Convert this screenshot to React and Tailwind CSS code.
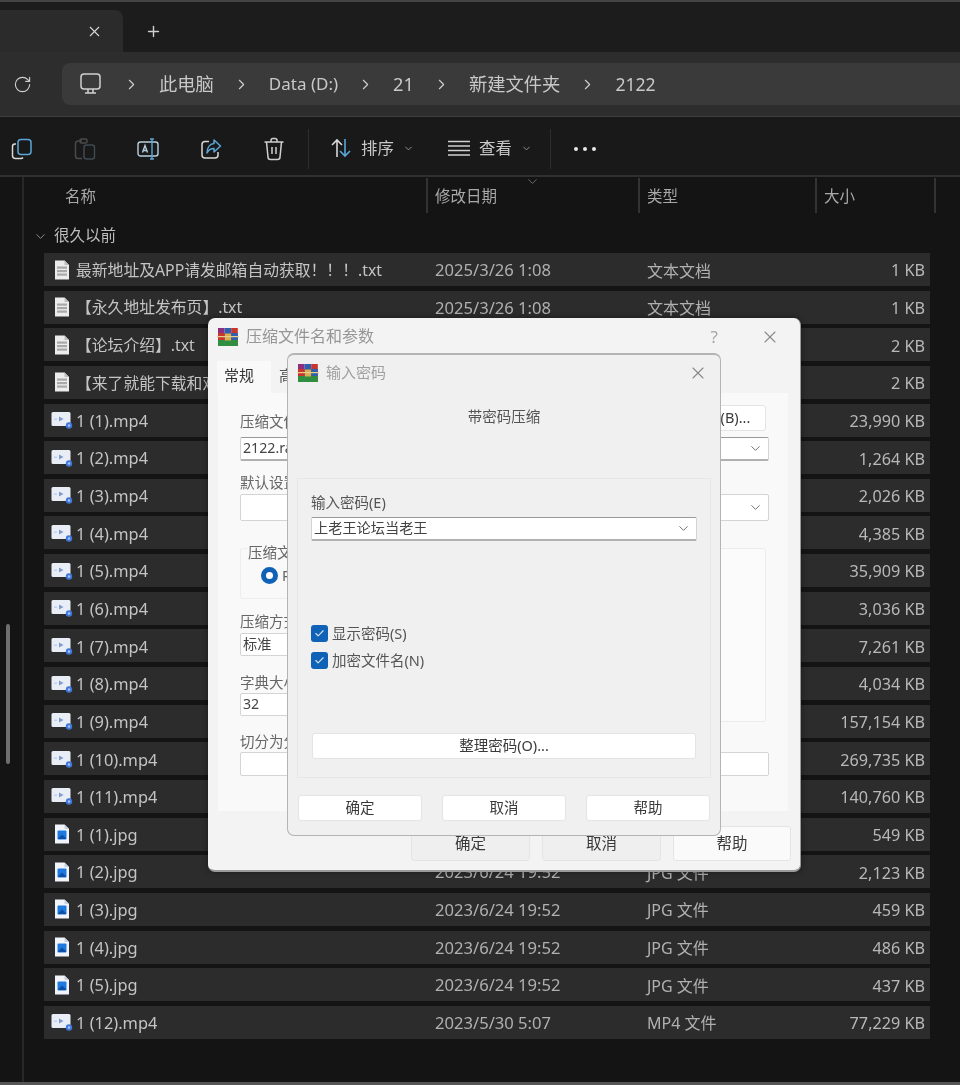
import React from "react";
import { X, Plus, RotateCw, ChevronRight, ChevronDown, Check } from "lucide-react";

const FONT = "font-['Noto_Sans','Noto_Sans_CJK_SC',sans-serif]";

const rows = [
  ["txt", "最新地址及APP请发邮箱自动获取！！！.txt", "2025/3/26 1:08", "文本文档", "1 KB"],
  ["txt", "【永久地址发布页】.txt", "2025/3/26 1:08", "文本文档", "1 KB"],
  ["txt", "【论坛介绍】.txt", "2025/3/26 1:08", "文本文档", "2 KB"],
  ["txt", "【来了就能下载和观看】.txt", "2025/3/26 1:08", "文本文档", "2 KB"],
  ["mp4", "1 (1).mp4", "2023/6/24 19:52", "MP4 文件", "23,990 KB"],
  ["mp4", "1 (2).mp4", "2023/6/24 19:52", "MP4 文件", "1,264 KB"],
  ["mp4", "1 (3).mp4", "2023/6/24 19:52", "MP4 文件", "2,026 KB"],
  ["mp4", "1 (4).mp4", "2023/6/24 19:52", "MP4 文件", "4,385 KB"],
  ["mp4", "1 (5).mp4", "2023/6/24 19:52", "MP4 文件", "35,909 KB"],
  ["mp4", "1 (6).mp4", "2023/6/24 19:52", "MP4 文件", "3,036 KB"],
  ["mp4", "1 (7).mp4", "2023/6/24 19:52", "MP4 文件", "7,261 KB"],
  ["mp4", "1 (8).mp4", "2023/6/24 19:52", "MP4 文件", "4,034 KB"],
  ["mp4", "1 (9).mp4", "2023/6/24 19:52", "MP4 文件", "157,154 KB"],
  ["mp4", "1 (10).mp4", "2023/6/24 19:52", "MP4 文件", "269,735 KB"],
  ["mp4", "1 (11).mp4", "2023/6/24 19:52", "MP4 文件", "140,760 KB"],
  ["jpg", "1 (1).jpg", "2023/6/24 19:52", "JPG 文件", "549 KB"],
  ["jpg", "1 (2).jpg", "2023/6/24 19:52", "JPG 文件", "2,123 KB"],
  ["jpg", "1 (3).jpg", "2023/6/24 19:52", "JPG 文件", "459 KB"],
  ["jpg", "1 (4).jpg", "2023/6/24 19:52", "JPG 文件", "486 KB"],
  ["jpg", "1 (5).jpg", "2023/6/24 19:52", "JPG 文件", "437 KB"],
  ["mp4", "1 (12).mp4", "2023/5/30 5:07", "MP4 文件", "77,229 KB"],
];

function FileIcon({ type }) {
  if (type === "mp4") {
    return (
      <svg width="22" height="18" viewBox="0 0 22 18" className="shrink-0">
        <rect x="0.5" y="1" width="19" height="14" rx="1.5" fill="#e9edf5" />
        <path d="M8 5.5 L12.5 8 L8 10.5 Z" fill="#7d9bd0" />
        <rect x="3" y="7.5" width="3" height="1.5" fill="#c3cfe6" />
        <circle cx="18" cy="14.5" r="3.2" fill="#3f78d8" />
        <circle cx="18" cy="14.5" r="1.2" fill="#a9c6f4" />
      </svg>
    );
  }
  if (type === "jpg") {
    return (
      <svg width="16" height="20" viewBox="0 0 16 20" className="shrink-0">
        <path d="M1 0.5 H10.5 L15 5 V19.5 H1 Z" fill="#f1f4fa" />
        <path d="M10.5 0.5 V5 H15 Z" fill="#c9d2e2" />
        <rect x="3.5" y="6.5" width="9" height="9" rx="1" fill="#1f7ae0" />
        <path d="M4 14.5 L8 10.5 L12 14 V15 H4 Z" fill="#0f4fa8" />
      </svg>
    );
  }
  return (
    <svg width="16" height="20" viewBox="0 0 16 20" className="shrink-0">
      <path d="M1 0.5 H10.5 L15 5 V19.5 H1 Z" fill="#ececec" />
      <path d="M10.5 0.5 V5 H15 Z" fill="#bdbdbd" />
      <g fill="#a8a8a8">
        <rect x="3" y="6.5" width="10" height="2.2" />
        <rect x="3" y="10" width="10" height="2.2" />
        <rect x="3" y="13.5" width="10" height="2.2" />
      </g>
    </svg>
  );
}

function RarIcon() {
  return (
    <svg width="22" height="20" viewBox="0 0 22 20" className="shrink-0">
      <rect x="1" y="1" width="6.6" height="18" fill="#8c2f7f" />
      <rect x="7.6" y="1" width="6.6" height="18" fill="#2f5fb0" />
      <rect x="14.2" y="1" width="6.6" height="18" fill="#c8352f" />
      <rect x="1" y="6" width="6.6" height="7" fill="#c8352f" />
      <rect x="14.2" y="6" width="6.6" height="7" fill="#2f5fb0" />
      <rect x="1" y="13" width="6.6" height="6" fill="#2e8f3e" />
      <rect x="7.6" y="13" width="6.6" height="6" fill="#2e8f3e" />
      <rect x="14.2" y="13" width="6.6" height="6" fill="#2e8f3e" />
      <rect x="8" y="6.5" width="6" height="7" fill="#d8b04a" />
      <rect x="0" y="9" width="22" height="1.2" fill="#e8d08a" />
    </svg>
  );
}

function Row({ r }) {
  return (
    <div className="flex items-center h-[33px] bg-[#2c2c2c] text-[#c4c4c4]">
      <div className="w-[32px] flex justify-center pl-[3px] shrink-0">
        <FileIcon type={r[0]} />
      </div>
      <div className={`w-[359px] pt-[2px] whitespace-nowrap overflow-hidden ${r[0] === "txt" ? "text-[15.8px]" : "text-[16.4px]"}`}>{r[1]}</div>
      <div className="w-[212px] pt-[2px] text-[#b0b0b0] text-[16.6px]">{r[2]}</div>
      <div className="w-[170px] pt-[2px] text-[#b0b0b0] text-[16px]">{r[3]}</div>
      <div className="flex-1 pt-[2px] text-right pr-[5px] text-[#b8b8b8] text-[16.2px]">{r[4]}</div>
    </div>
  );
}

function Crumb({ children, cls = "text-[18.3px]" }) {
  return <span className={`whitespace-nowrap ${cls}`}>{children}</span>;
}
function Sep() {
  return <ChevronRight size={17} strokeWidth={1.6} className="text-[#cfcfcf] mx-[19px] shrink-0" />;
}
function HCol({ w, children }) {
  return (
    <div className={`${w} h-[35px] border-r-2 border-[#333] flex items-center`}>
      {children}
    </div>
  );
}

function Combo({ w, text, arrow, h = "h-[24px]", strong }) {
  return (
    <div className={`${w} ${h} bg-white rounded-[2px] border border-[#d4d4d4] ${strong ? "border-[#bcbcbc] border-t-[#999] border-b-2 border-b-[#b0b0b0]" : ""} flex items-center justify-between pl-[2px] pr-[5px] pb-[2px] text-[14.2px] text-[#444]`}>
      <span className="whitespace-nowrap">{text}</span>
      {arrow && <ChevronDown size={15} strokeWidth={1.5} className="text-[#666] shrink-0 mt-[2px]" />}
    </div>
  );
}

function DlgButton({ w, h, children, cls = "" }) {
  return (
    <div className={`${w} ${h} rounded-[3px] border border-[#e4e4e4] flex items-center justify-center text-[#3a3a3a] ${cls}`}>
      {children}
    </div>
  );
}

function Checkbox({ label }) {
  return (
    <div className="flex items-center gap-[4px] h-[17px]">
      <div className="w-[17px] h-[17px] rounded-[3px] bg-[#0f62b5] flex items-center justify-center">
        <Check size={11} strokeWidth={2.5} className="text-[#cfe3f7]" />
      </div>
      <span className="text-[14.5px] text-[#555]">{label}</span>
    </div>
  );
}

function OuterDialog() {
  return (
    <div className="absolute left-[208px] top-[318px] w-[593px] h-[554px] bg-[#f3f3f3] rounded-[7px] border-b-2 border-r border-[#9a9a9a] flex flex-col shadow-[0_0_6px_rgba(0,0,0,0.4)]">
      <div className="h-[37px] flex items-center pl-[9px] pr-[20px] shrink-0">
        <RarIcon />
        <span className="ml-[7px] text-[16px] text-[#969696] -mt-[2px]">压缩文件名和参数</span>
        <span className="ml-auto text-[#a8a8a8] text-[17px] mr-[42px]">?</span>
        <X size={20} strokeWidth={1.3} className="text-[#8a8a8a]" />
      </div>
      <div className="flex pl-[9px] h-[38px] shrink-0 items-end">
        <div className="h-[32px] w-[54px] bg-[#f9f9f9] flex items-center pl-[7px] pb-[4px] text-[15px] text-[#333]">常规</div>
        <div className="h-[32px] w-[54px] flex items-center pl-[8px] pb-[4px] text-[15px] text-[#555]">高级</div>
      </div>
      <div className="mx-[10px] w-[570px] h-[418px] bg-[#f9f9f9] px-[22px] text-[14.5px] text-[#666] flex flex-col">
        <div className="flex justify-end h-[12px]">
          <DlgButton w="w-[120px]" h="h-[26px]" cls="mt-[12px] pl-[30px] text-[14.5px] bg-white shrink-0">浏览(B)...</DlgButton>
        </div>
        <div className="mt-[6px] h-[20px] leading-[20px]">压缩文件名(A)</div>
        <div className="mt-[6px]"><Combo w="w-[529px]" text="2122.rar" arrow strong /></div>
        <div className="mt-[11px] h-[20px] leading-[20px]">默认设置</div>
        <div className="mt-[2px]"><Combo w="w-[529px]" text="" arrow h="h-[27px]" /></div>
        <div className="mt-[27px] flex">
          <div className="w-[200px] h-[51px] border border-[#eeeeee] rounded-[2px] px-[20px] relative">
            <div className="absolute left-[7px] top-[-7px] bg-[#f9f9f9] h-[20px] leading-[20px] w-[70px] whitespace-nowrap">压缩文件格式</div>
            <div className="flex items-center gap-[4px] mt-[16px]">
              <div className="w-[17px] h-[17px] rounded-full border-[5px] border-[#0f62b5] bg-white" />
              <span>RAR</span>
            </div>
          </div>
          <div className="ml-auto w-[50px] h-[174px] bg-[#fbfbfb] border border-[#ececec] rounded-[2px]" />
        </div>
        <div className="-mt-[111px] h-[20px] leading-[20px]">压缩方式(M)</div>
        <div className="mt-[2px]"><Combo w="w-[100px]" text="标准" h="h-[23px]" /></div>
        <div className="mt-[16px] h-[20px] leading-[20px]">字典大小(I)</div>
        <div className="mt-[1px]"><Combo w="w-[100px]" text="32" h="h-[23px]" /></div>
        <div className="mt-[15px] h-[20px] leading-[20px]">切分为分卷(V)</div>
        <div className="mt-[1px]"><Combo w="w-[529px]" text="" h="h-[24px]" /></div>
      </div>
      <div className="flex justify-end gap-[12px] pr-[9px] mt-[15px]">
        <DlgButton w="w-[119px]" h="h-[35px]" cls="text-[15.5px] bg-[#efefef]">确定</DlgButton>
        <DlgButton w="w-[119px]" h="h-[35px]" cls="text-[15.5px] bg-[#efefef]">取消</DlgButton>
        <DlgButton w="w-[118px]" h="h-[35px]" cls="text-[15.5px] bg-[#fafafa]">帮助</DlgButton>
      </div>
    </div>
  );
}

function InnerDialog() {
  return (
    <div className="absolute left-[287px] top-[353px] w-[434px] h-[483px] bg-[#f0f0f0] rounded-[7px] border border-[#b4b4b4] border-t-2 flex flex-col">
      <div className="h-[36px] flex items-center pl-[9px] pr-[12px] shrink-0">
        <RarIcon />
        <span className="ml-[7px] text-[15px] text-[#a0a0a0] -mt-[2px]">输入密码</span>
        <X size={20} strokeWidth={1.3} className="text-[#888] ml-auto" />
      </div>
      <div className="text-center text-[14.5px] text-[#555] mt-[15px] h-[20px] leading-[20px]">带密码压缩</div>
      <div className="mx-[9px] mt-[52px] w-[414px] h-[300px] border border-[#e6e6e6] px-[13px] flex flex-col shrink-0">
        <div className="mt-[13px] h-[20px] leading-[20px] text-[14.5px] text-[#555]">输入密码(E)</div>
        <div className="mt-[5px]"><Combo w="w-[386px]" text="上老王论坛当老王" arrow strong /></div>
        <div className="mt-[84px] flex flex-col gap-[10px]">
          <Checkbox label="显示密码(S)" />
          <Checkbox label="加密文件名(N)" />
        </div>
        <DlgButton w="w-[384px]" h="h-[26px]" cls="mt-[64px] ml-[1px] text-[14.5px] bg-white">整理密码(O)...</DlgButton>
      </div>
      <div className="flex justify-between px-[10px] mt-[17px]">
        <DlgButton w="w-[124px]" h="h-[26px]" cls="text-[14.5px] bg-white">确定</DlgButton>
        <DlgButton w="w-[124px]" h="h-[26px]" cls="text-[14.5px] bg-white">取消</DlgButton>
        <DlgButton w="w-[124px]" h="h-[26px]" cls="text-[14.5px] bg-white">帮助</DlgButton>
      </div>
    </div>
  );
}

export default function App() {
  return (
    <div className={`${FONT} relative w-[960px] h-[1085px] overflow-hidden bg-[#141414] flex flex-col blur-[0.4px]`}>
      {/* tab strip */}
      <div className="h-[52px] bg-[#1c1c1c] border-t-2 border-[#444] flex shrink-0 items-end">
        <div className="w-[123px] h-[42px] bg-[#2b2b2b] rounded-tr-[8px] flex items-center justify-end pr-[20px]">
          <X size={17} strokeWidth={1.5} className="text-[#d8d8d8]" />
        </div>
        <div className="ml-[22px] h-[42px] flex items-center">
          <Plus size={17} strokeWidth={2} className="text-[#d0d0d0]" />
        </div>
      </div>
      {/* address row */}
      <div className="h-[65px] bg-[#2d2d2d] border-b border-[#3f3f3f] flex items-center shrink-0">
        <div className="w-[62px] pl-[13px] shrink-0">
          <RotateCw size={19} strokeWidth={1.4} className="text-[#d0d0d0]" />
        </div>
        <div className="flex-1 h-[42px] bg-[#3a3a3a] rounded-l-[8px] flex items-center pl-[18px] text-[#c8c8c8]">
          <svg width="21" height="24" viewBox="0 0 21 24" fill="none" stroke="#d0d0d0" strokeWidth="1.5" className="shrink-0">
            <rect x="1" y="2" width="19" height="15" rx="3" />
            <path d="M5 21 H16 M8 17 V21 M13 17 V21" />
          </svg>
          <div className="ml-[3px] flex items-center">
            <Sep /><Crumb>此电脑</Crumb><Sep /><Crumb cls="text-[17px]">Data (D:)</Crumb><Sep /><Crumb>21</Crumb><Sep /><Crumb>新建文件夹</Crumb><Sep /><Crumb cls="text-[17.6px]">2122</Crumb>
          </div>
        </div>
      </div>
      {/* toolbar */}
      <div className="h-[60px] bg-[#191919] border-b-2 border-[#303030] flex items-center pt-[5px] shrink-0 text-[16.4px] text-[#c8c8c8]">
        <div className="flex gap-[41px] pl-[11px] w-[308px] shrink-0 items-center">
          <svg width="22" height="22" viewBox="0 0 22 22" fill="none" strokeWidth="1.5">
            <path d="M5 6 H4 A2.5 2.5 0 0 0 1.5 8.5 V17.5 A3 3 0 0 0 4.5 20.5 H10 A3 3 0 0 0 12 19.5" stroke="#d8d8d8" />
            <rect x="7" y="1.5" width="13" height="15" rx="3" stroke="#5aa6d6" />
          </svg>
          <svg width="22" height="22" viewBox="0 0 22 22" fill="none" stroke="#4a4a4a" strokeWidth="1.5">
            <path d="M8 3 H4 A2.5 2.5 0 0 0 1.5 5.5 V18 A2.5 2.5 0 0 0 4 20.5 H8" />
            <rect x="6" y="1" width="7" height="4" rx="1.5" />
            <rect x="10" y="7" width="10.5" height="14" rx="2.5" stroke="#3f4a50" />
          </svg>
          <svg width="22" height="22" viewBox="0 0 22 22" fill="none" stroke="#b8cfe0" strokeWidth="1.4">
            <rect x="1" y="4" width="20" height="14" rx="2.5" />
            <path d="M5.5 14.5 L8 7.5 L10.5 14.5 M6.3 12.5 H9.7" />
            <path d="M15 1 V21 M13 1 H17 M13 21 H17" stroke="#5aa6d6" />
          </svg>
          <svg width="22" height="22" viewBox="0 0 22 22" fill="none" strokeWidth="1.5">
            <path d="M9 3.5 H5 A3 3 0 0 0 2 6.5 V17 A3 3 0 0 0 5 20 H15 A3 3 0 0 0 18 17 V14" stroke="#d8d8d8" />
            <path d="M14 2 L20.5 8 L14 14 V10.5 C10.5 10.5 8.5 12 7 15 C7 10 9.5 6 14 5.5 Z" stroke="#5aa6d6" strokeLinejoin="round" />
          </svg>
          <svg width="22" height="24" viewBox="0 0 22 24" fill="none" stroke="#d0d0d0" strokeWidth="1.5">
            <path d="M1.5 5 H20.5 M8 5 V3.5 A2 2 0 0 1 10 1.5 H12 A2 2 0 0 1 14 3.5 V5" />
            <path d="M3.5 5 L5 20 A2.5 2.5 0 0 0 7.5 22.5 H14.5 A2.5 2.5 0 0 0 17 20 L18.5 5" />
            <path d="M9 10 V17 M13 10 V17" />
          </svg>
        </div>
        <div className="w-px h-[40px] bg-[#2e2e2e] shrink-0" />
        <div className="flex items-center pl-[21px] gap-[9px] w-[102px] shrink-0">
          <svg width="22" height="22" viewBox="0 0 22 22" fill="none" strokeWidth="1.6" className="shrink-0">
            <path d="M7 20 V3 M2 8 L7 3 L12 8" stroke="#d8d8d8" />
            <path d="M15 2 V19 M10 14 L15 19 L20 14" stroke="#5aa6d6" />
          </svg>
          <span className="whitespace-nowrap">排序</span>
          <ChevronDown size={11} className="text-[#999] shrink-0" />
        </div>
        <div className="flex items-center pl-[37px] gap-[9px] w-[139px] shrink-0">
          <svg width="22" height="16" viewBox="0 0 22 16" fill="none" stroke="#d0d0d0" strokeWidth="1.4" className="shrink-0">
            <path d="M0 1.5 H22 M0 6 H22 M0 10.5 H22 M0 15 H22" />
          </svg>
          <span className="whitespace-nowrap">查看</span>
          <ChevronDown size={11} className="text-[#999] shrink-0" />
        </div>
        <div className="w-px h-[40px] bg-[#2e2e2e] shrink-0" />
        <div className="ml-[23px] flex gap-[5px]">
          <div className="w-[4px] h-[4px] rounded-full bg-[#e8e8e8]" />
          <div className="w-[4px] h-[4px] rounded-full bg-[#e8e8e8]" />
          <div className="w-[4px] h-[4px] rounded-full bg-[#e8e8e8]" />
        </div>
      </div>
      {/* list */}
      <div className="flex-1 flex min-h-0">
        <div className="w-[24px] shrink-0 relative border-r-2 border-[#282828]">
          <div className="absolute left-[6px] top-[447px] w-[4px] h-[140px] bg-[#6e6e6e] rounded-full" />
        </div>
        <div className="flex-1 flex flex-col min-w-0">
          <div className="flex h-[35px] text-[15.5px] text-[#a8a8a8] relative shrink-0 pt-[1px]">
            <HCol w="w-[404px]"><span className="pl-[41px] pt-[3px]">名称</span></HCol>
            <HCol w="w-[212px]"><span className="pl-[7px] pt-[3px]">修改日期</span></HCol>
            <HCol w="w-[177px]"><span className="pl-[7px] pt-[3px]">类型</span></HCol>
            <HCol w="w-[119px]"><span className="pl-[7px] pt-[3px]">大小</span></HCol>
            <ChevronDown size={15} strokeWidth={1.2} className="absolute left-[501px] top-[-3px] text-[#888]" />
          </div>
          <div className="flex items-center h-[41px] pl-[9px] gap-[6px] pt-[7px] text-[15.5px] text-[#bdbdbd] shrink-0">
            <ChevronDown size={15} strokeWidth={1.4} className="text-[#999]" />
            <span>很久以前</span>
          </div>
          <div className="flex flex-col gap-[4.65px] ml-[20px] w-[886px]">
            {rows.map((r, i) => <Row key={i} r={r} />)}
          </div>
        </div>
      </div>
      <div className="h-[3px] bg-[#555] shrink-0" />
      <OuterDialog />
      <InnerDialog />
    </div>
  );
}
